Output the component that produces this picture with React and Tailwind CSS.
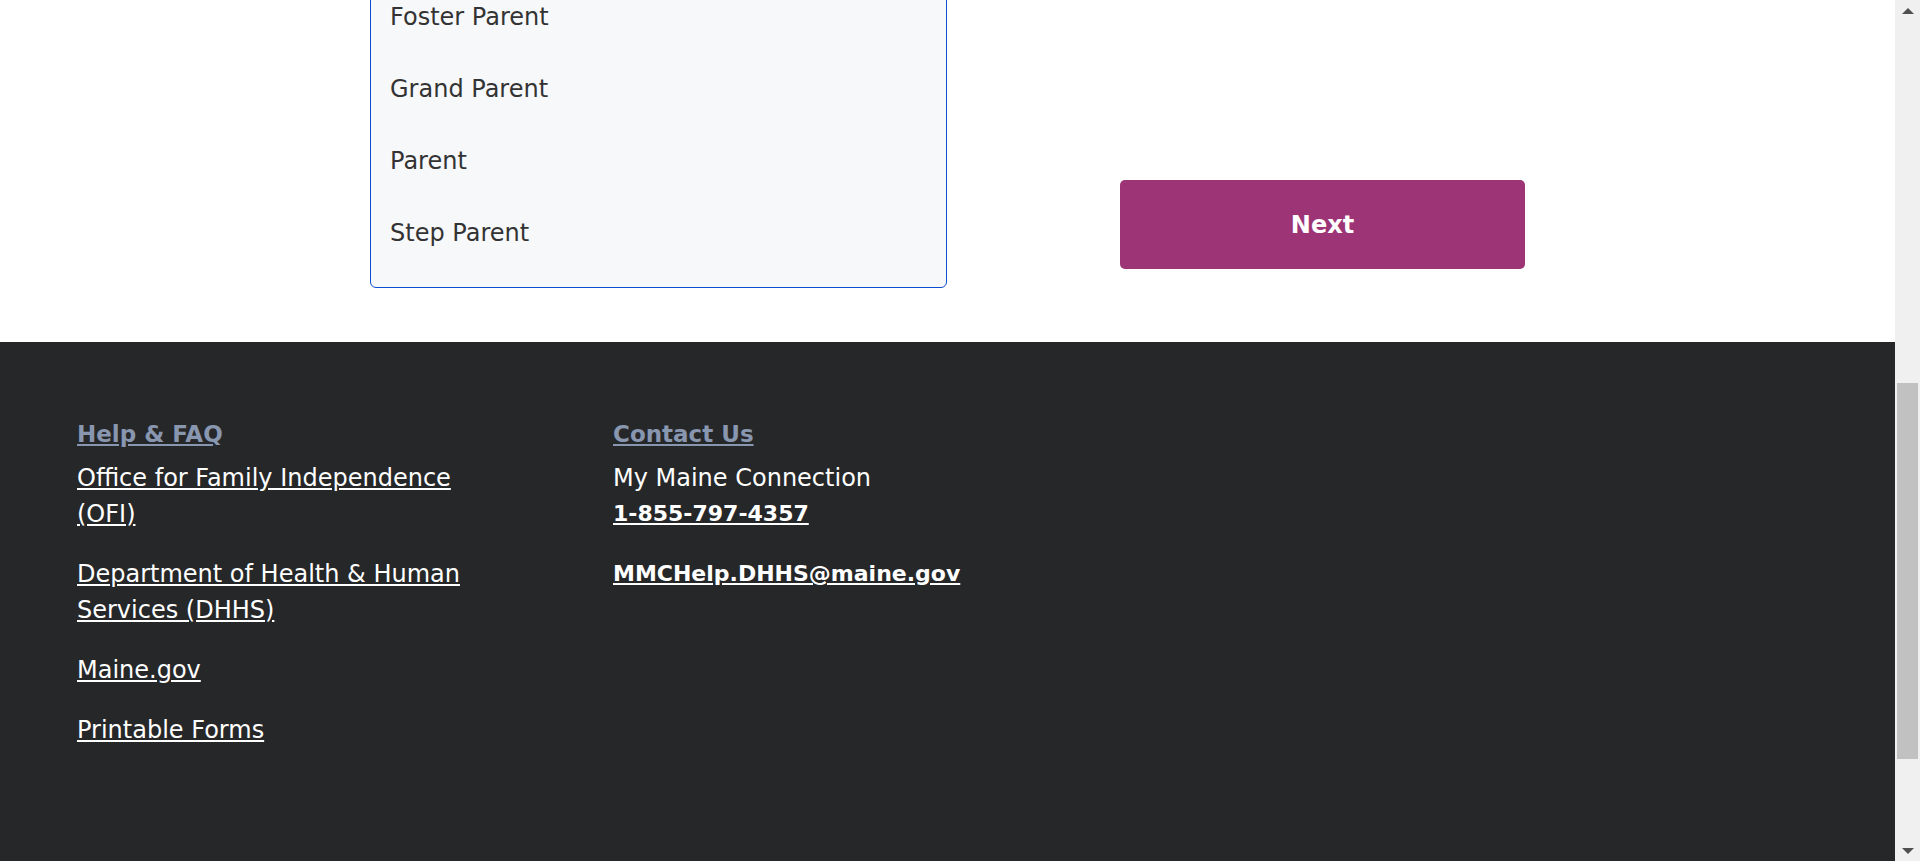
const relations = ['Foster Parent', 'Grand Parent', 'Parent', 'Step Parent'];

const helpLinks = [
  'Office for Family Independence (OFI)',
  'Department of Health & Human Services (DHHS)',
  'Maine.gov',
  'Printable Forms',
];

function Scrollbar() {
  return (
    <div className="w-[25px] shrink-0 bg-[#f0f0f0] flex flex-col items-center">
      <div className="h-[17px] flex items-center justify-center pt-[4px]">
        <div className="w-0 h-0 border-x-[6px] border-x-transparent border-b-[6px] border-b-[#505050]" />
      </div>
      <div className="h-[366px]" />
      <div className="w-[21px] h-[376px] bg-[#c1c1c1]" />
      <div className="flex-1" />
      <div className="h-[17px] flex items-center justify-center pb-[4px]">
        <div className="w-0 h-0 border-x-[6px] border-x-transparent border-t-[6px] border-t-[#505050]" />
      </div>
    </div>
  );
}

export default function App() {
  return (
    <div className="flex h-[861px] w-full overflow-hidden bg-white" style={{ fontFamily: '"DejaVu Sans", sans-serif' }}>
      <div className="flex-1 flex flex-col min-w-0">
        {/* Form area - list box scrolled so only its tail is visible */}
        <div className="h-[342px] shrink-0 overflow-hidden flex items-end pb-[54px]">
          <div className="ml-[370px] w-[577px] shrink-0 border border-[#0a4ecf] rounded-[6px] bg-[#f7f8fa] px-[19px] pt-[40px] pb-[18px]">
            {relations.map((r) => (
              <div key={r} className="h-[72px] flex items-center text-[24px] text-[#333333]">
                {r}
              </div>
            ))}
          </div>
          <button className="ml-[173px] mb-[19px] w-[405px] h-[89px] rounded-[5px] bg-[#9c3476] text-white text-[24px] font-bold">
            Next
          </button>
        </div>

        {/* Footer */}
        <footer className="flex-1 bg-[#262729] pl-[77px] pt-[74px] flex gap-[60px]">
          <div className="w-[476px]">
            <a href="#" className="block text-[23px] leading-[36px] font-bold text-[#8896b0] underline">
              Help &amp; FAQ
            </a>
            <div className="mt-[8px] flex flex-col gap-[24px]">
              {helpLinks.map((l) => (
                <a key={l} href="#" className="block w-[400px] text-[24px] leading-[36px] text-white underline">
                  {l}
                </a>
              ))}
            </div>
          </div>
          <div>
            <a href="#" className="block text-[23px] leading-[36px] font-bold text-[#8896b0] underline">
              Contact Us
            </a>
            <div className="mt-[8px] text-[24px] leading-[36px] text-white">
              <p>My Maine Connection</p>
              <a href="#" className="block text-[22px] font-bold underline">1-855-797-4357</a>
              <a href="#" className="block mt-[24px] text-[22px] font-bold underline">MMCHelp.DHHS@maine.gov</a>
            </div>
          </div>
        </footer>
      </div>
      <Scrollbar />
    </div>
  );
}
